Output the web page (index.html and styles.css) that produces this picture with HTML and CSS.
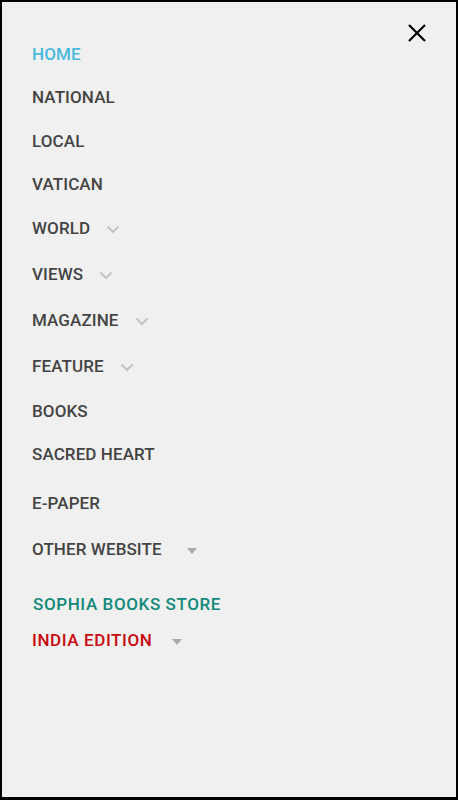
FILE: index.html
```html
<!DOCTYPE html>
<html lang="en">
<head>
<meta charset="utf-8">
<title>Menu</title>
<link rel="stylesheet" href="styles.css">
</head>
<body>
<div class="drawer">
  <button class="close" aria-label="Close">
    <svg width="20" height="20" viewBox="0 0 20 20"><path d="M2 2 L18 18 M18 2 L2 18" stroke="#000" stroke-width="2.2" fill="none"/></svg>
  </button>
  <nav class="menu">
    <a class="item active r-home">HOME</a>
    <a class="item r-national">NATIONAL</a>
    <a class="item r-local">LOCAL</a>
    <a class="item r-vatican">VATICAN</a>
    <a class="item r-drop">WORLD <svg class="chev" width="14" height="9" viewBox="0 0 14 9"><path d="M1.5 1.5 L7 7 L12.5 1.5" stroke="#c4c4c4" stroke-width="2" fill="none"/></svg></a>
    <a class="item r-drop">VIEWS <svg class="chev" width="14" height="9" viewBox="0 0 14 9"><path d="M1.5 1.5 L7 7 L12.5 1.5" stroke="#c4c4c4" stroke-width="2" fill="none"/></svg></a>
    <a class="item r-drop">MAGAZINE <svg class="chev" width="14" height="9" viewBox="0 0 14 9"><path d="M1.5 1.5 L7 7 L12.5 1.5" stroke="#c4c4c4" stroke-width="2" fill="none"/></svg></a>
    <a class="item r-feature">FEATURE <svg class="chev" width="14" height="9" viewBox="0 0 14 9"><path d="M1.5 1.5 L7 7 L12.5 1.5" stroke="#c4c4c4" stroke-width="2" fill="none"/></svg></a>
    <a class="item r-books">BOOKS</a>
    <a class="item r-sacred">SACRED HEART</a>
    <a class="item r-epaper">E-PAPER</a>
    <a class="item r-other">OTHER WEBSITE <span class="tri tri-wide"></span></a>
    <a class="item special teal r-sophia">SOPHIA BOOKS STORE</a>
    <a class="item special red r-india">INDIA EDITION <span class="tri"></span></a>
  </nav>
</div>
</body>
</html>
```
FILE: styles.css
```css
* { box-sizing: border-box; }
html, body { margin: 0; padding: 0; }
body {
  width: 458px;
  height: 800px;
  background: #000;
  font-family: Roboto, "Noto Sans", sans-serif;
}
.drawer {
  position: relative;
  width: 458px;
  height: 800px;
  background: #f0f0f0;
  border: 2px solid #000;
  border-bottom-width: 3px;
  padding: 34px 0 0 30px;
}
.close {
  position: absolute;
  top: 20px;
  right: 28px;
  width: 22px;
  height: 22px;
  padding: 1px;
  border: 0;
  background: none;
  display: flex;
  align-items: center;
  justify-content: center;
}
.menu {
  display: flex;
  flex-direction: column;
  align-items: flex-start;
}
.item {
  display: flex;
  align-items: center;
  height: 36px;
  font-size: 17px;
  font-weight: 500;
  color: #444;
  letter-spacing: 0.1px;
  text-decoration: none;
}
.item.active { color: #48b9dc; }
.r-home { margin-bottom: 7px; }
.r-national { margin-bottom: 8px; }
.r-local { margin-bottom: 7px; }
.r-vatican { margin-bottom: 8px; }
.r-drop { margin-bottom: 10px; }
.r-feature { margin-bottom: 9px; }
.r-books { margin-bottom: 7px; }
.r-sacred { margin-bottom: 13px; }
.r-epaper { margin-bottom: 10px; }
.r-other { margin-bottom: 19px; }
.chev { margin-left: 16px; margin-top: 2px; }
.tri {
  width: 0;
  height: 0;
  margin-left: 20px;
  margin-top: 3px;
  border-left: 5.5px solid transparent;
  border-right: 5.5px solid transparent;
  border-top: 6px solid #ababab;
}
.tri-wide { margin-left: 25px; }
.special {
  font-weight: 500;
  letter-spacing: 0.6px;
}
.teal { color: #12897a; padding-left: 1px; }
.red { color: #c8090f; }
```
